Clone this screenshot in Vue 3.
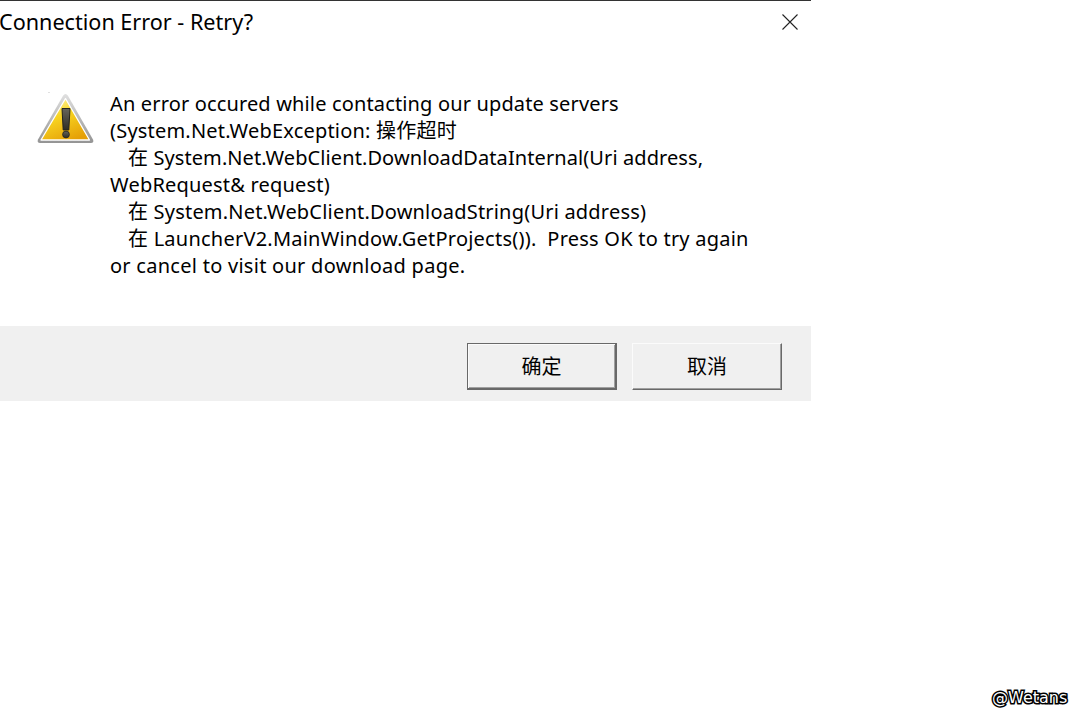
<template>
  <div class="page">
    <div class="dialog">
      <header class="titlebar">
        <span class="title">Connection Error - Retry?</span>
        <svg class="close" width="16" height="16" viewBox="0 0 16 16">
          <path d="M0.5 0.5 L15.5 15.5 M15.5 0.5 L0.5 15.5" stroke="#222" stroke-width="1.1" fill="none" />
        </svg>
      </header>
      <main class="content">
        <svg class="warn" width="60" height="56" viewBox="0 0 60 56">
          <defs>
            <linearGradient id="fill" x1="0.2" y1="0" x2="0.7" y2="1">
              <stop offset="0" stop-color="#fff6b0" />
              <stop offset="0.4" stop-color="#f8d522" />
              <stop offset="1" stop-color="#e59f06" />
            </linearGradient>
            <linearGradient id="edge" x1="0" y1="0" x2="0" y2="1">
              <stop offset="0" stop-color="#e0e0e0" />
              <stop offset="1" stop-color="#949494" />
            </linearGradient>
            <linearGradient id="mark" x1="0" y1="0" x2="0" y2="1">
              <stop offset="0" stop-color="#66645a" />
              <stop offset="1" stop-color="#2e2e26" />
            </linearGradient>
          </defs>
          <circle cx="13" cy="2.5" r="0.6" fill="#bbb" />
          <path d="M29.5 4 C30.5 4 31.5 5 32.1 6 L57 49.5 C58 51.5 57 53 55 53 L4 53 C2 53 1 51.5 2 49.5 L26.9 6 C27.5 5 28.5 4 29.5 4 Z" fill="url(#edge)" />
          <path d="M29.5 8.5 L53.5 50 L5 50 Z" fill="url(#fill)" stroke="#fff" stroke-width="1.3" stroke-linejoin="round" />
          <path d="M26 18.5 H34 L32.8 40 H27.2 Z" fill="url(#mark)" stroke="#24241e" stroke-width="1" stroke-linejoin="round" />
          <circle cx="30" cy="44.5" r="3.4" fill="url(#mark)" stroke="#24241e" stroke-width="0.8" />
        </svg>
        <div class="message">
          <p class="tight">An error occured while contacting our update servers</p>
          <p>(System.Net.WebException: 操作超时</p>
          <p class="indented tighter">在 System.Net.WebClient.DownloadDataInternal(Uri address,</p>
          <p>WebRequest&amp; request)</p>
          <p class="indented">在 System.Net.WebClient.DownloadString(Uri address)</p>
          <p class="indented wide">在 LauncherV2.MainWindow.GetProjects()).&nbsp; Press OK to try again</p>
          <p class="wider">or cancel to visit our download page.</p>
        </div>
      </main>
      <footer class="actions">
        <button class="btn primary">确定</button>
        <button class="btn">取消</button>
      </footer>
    </div>
    <span class="watermark">@Wetans</span>
  </div>
</template>

<script setup>
</script>

<style>
html, body { margin: 0; background: #fff; }
</style>

<style scoped>
.page {
  width: 1080px;
  height: 720px;
  background: #fff;
  position: relative;
  overflow: hidden;
  font-family: "Noto Sans", "Noto Sans CJK SC", sans-serif;
  color: #000;
}
.dialog {
  width: 811px;
  height: 401px;
  display: flex;
  flex-direction: column;
  border-top: 1px solid #333;
  box-sizing: border-box;
}
.titlebar {
  height: 43px;
  display: flex;
  justify-content: space-between;
  align-items: center;
  padding-right: 13px;
}
.title {
  font-size: 21.6px;
  line-height: 42px;
  margin-left: -1px;
  margin-top: -1px;
}
.close { display: block; margin-top: -1px; }
.content {
  flex: 1;
  display: flex;
  align-items: flex-start;
  padding: 46px 0 0 36px;
}
.warn { flex: none; }
.message {
  margin-left: 14px;
  font-size: 20px;
  line-height: 27px;
  letter-spacing: 0.2px;
}
.message p { margin: 0; white-space: pre; }
.message .tight { letter-spacing: 0.15px; }
.message .tighter { letter-spacing: 0.09px; }
.message .wide { letter-spacing: 0.23px; }
.message .wider { letter-spacing: 0.27px; }
.indented { padding-left: 18px; }
.actions {
  height: 75px;
  background: #f0f0f0;
  display: flex;
  justify-content: flex-end;
  align-items: flex-start;
  gap: 15px;
  padding: 17px 29px 0 0;
  box-sizing: border-box;
}
.btn {
  width: 150px;
  height: 47px;
  padding: 0 0 2px;
  background: #f0f0f0;
  font: inherit;
  font-size: 20px;
  color: #000;
  border: 1px solid;
  border-color: #fbfbfb #696969 #696969 #fbfbfb;
  box-shadow: inset -1px -1px 0 #a0a0a0, inset 1px 1px 0 #f0f0f0;
}
.btn.primary {
  border: 1px solid #696969;
  border-width: 1px 2px 2px 1px;
  box-shadow: inset 1px 1px 0 #fbfbfb, inset -1px -1px 0 #a0a0a0;
}
.watermark {
  position: absolute;
  left: 992px;
  top: 688px;
  font-family: "DejaVu Sans", sans-serif;
  font-size: 16px;
  line-height: 20px;
  color: #fff;
  -webkit-text-stroke: 3px #000;
  paint-order: stroke fill;
}
</style>
